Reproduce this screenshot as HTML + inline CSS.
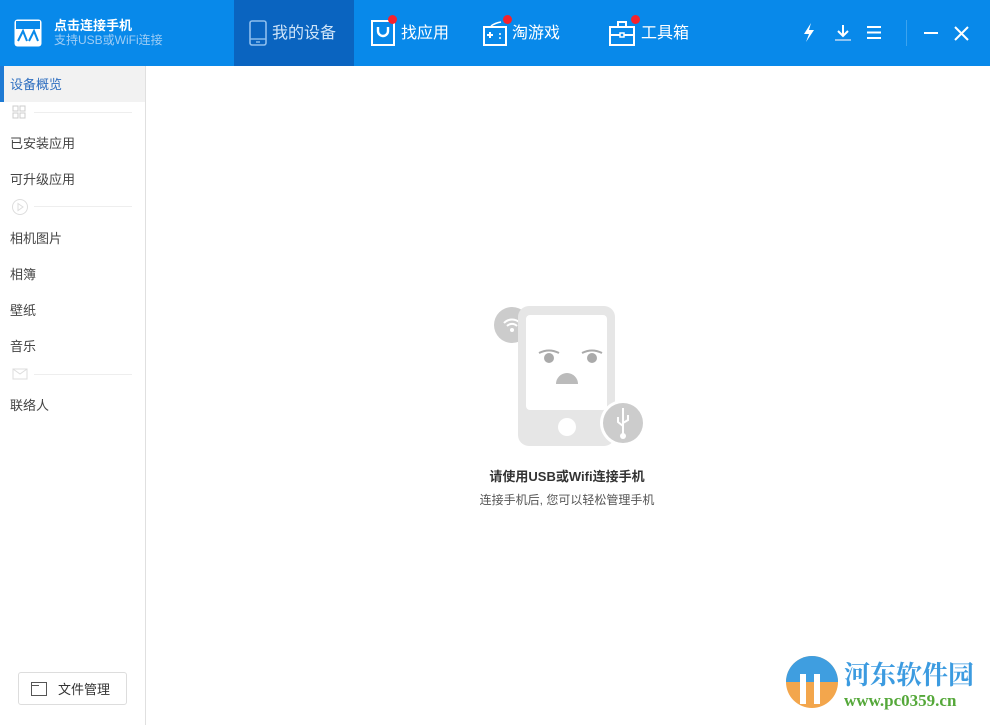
<!DOCTYPE html>
<html><head><meta charset="utf-8"><style>
*{margin:0;padding:0;box-sizing:border-box}
body{width:990px;height:725px;overflow:hidden;background:#fff;font-family:"Liberation Sans","Noto Sans CJK SC",sans-serif;position:relative}
.top{position:absolute;left:0;top:0;width:990px;height:66px;background:#0889ea}
.abs{position:absolute}
.w{color:#fff}
.side{position:absolute;left:0;top:66px;width:146px;height:659px;border-right:1px solid #e0e0e0;background:#fff}
.item{position:absolute;left:10px;font-size:13px;color:#444}
.sep{position:absolute;left:12px;width:120px;height:16px}
.sep .l{position:absolute;left:22px;top:7px;width:98px;height:1px;background:#eee}
.dot{position:absolute;width:9px;height:9px;border-radius:50%;background:#f5222d}
</style></head><body>
<div class="top">
 <svg class="abs" style="left:14px;top:19px" width="28" height="28" viewBox="0 0 28 28"><rect x="0.5" y="0.5" width="27" height="27" rx="3" fill="#fff"/><rect x="2" y="2" width="24" height="8" fill="#0889ea"/><path d="M4 22 L9 12 L13 22 M15 22 L20 12 L24 22" stroke="#0889ea" stroke-width="2" fill="none"/></svg>
 <div class="abs w" style="left:54px;top:15px;font-size:13px;font-weight:bold">点击连接手机</div>
 <div class="abs" style="left:54px;top:31px;font-size:12px;color:#9fcdf5">支持USB或WiFi连接</div>
 <div class="abs" style="left:234px;top:0;width:120px;height:66px;background:#0a64c0"></div>
 <svg class="abs" style="left:249px;top:20px" width="18" height="26"><rect x="1" y="1" width="16" height="24" rx="2" fill="none" stroke="#8ebfee" stroke-width="1.6"/><line x1="1" y1="19" x2="17" y2="19" stroke="#8ebfee" stroke-width="1.4"/><line x1="7" y1="22" x2="11" y2="22" stroke="#8ebfee" stroke-width="1.4"/></svg>
 <div class="abs" style="left:272px;top:19px;font-size:16px;color:#cfe4f8">我的设备</div>
 <svg class="abs" style="left:371px;top:20px" width="25" height="26"><rect x="1" y="1" width="22" height="24" fill="none" stroke="#fff" stroke-width="2"/><path d="M7 7 v4 a5 5 0 0 0 10 0 v-4" stroke="#fff" stroke-width="2.4" fill="none"/></svg>
 <div class="dot" style="left:388px;top:15px"></div>
 <div class="abs w" style="left:401px;top:19px;font-size:16px">找应用</div>
 <svg class="abs" style="left:483px;top:20px" width="26" height="26"><rect x="1" y="7" width="22" height="18" fill="none" stroke="#fff" stroke-width="2"/><path d="M4 15h6M7 12v6" stroke="#fff" stroke-width="2"/><circle cx="17" cy="14" r="1" fill="#fff"/><circle cx="17" cy="18" r="1" fill="#fff"/><path d="M8 6 q4 -3 10 -4" stroke="#fff" stroke-width="1.5" fill="none"/></svg>
 <div class="dot" style="left:503px;top:15px"></div>
 <div class="abs w" style="left:512px;top:19px;font-size:16px">淘游戏</div>
 <svg class="abs" style="left:609px;top:20px" width="28" height="26"><rect x="1" y="7" width="24" height="18" fill="none" stroke="#fff" stroke-width="2"/><path d="M9 7v-5h8v5M1 15h24" stroke="#fff" stroke-width="2" fill="none"/><rect x="11" y="13" width="4" height="4" fill="#0889ea" stroke="#fff" stroke-width="1.5"/></svg>
 <div class="dot" style="left:631px;top:15px"></div>
 <div class="abs w" style="left:641px;top:19px;font-size:16px">工具箱</div>
 <svg class="abs" style="left:802px;top:23px" width="14" height="19"><path d="M9 0 L2 11 H7 L4 19 L12 7 H7 Z" fill="#fff"/></svg>
 <svg class="abs" style="left:835px;top:24px" width="16" height="18"><path d="M8 1v11M3 7l5 5 5-5" stroke="#fff" stroke-width="2" fill="none"/><line x1="0" y1="16" x2="16" y2="16" stroke="#8ec4f2" stroke-width="2"/></svg>
 <svg class="abs" style="left:867px;top:26px" width="15" height="13"><path d="M0 1h14M0 6.5h14M0 12h14" stroke="#fff" stroke-width="2"/></svg>
 <div class="abs" style="left:906px;top:20px;width:1px;height:26px;background:#3ca3ef"></div>
 <svg class="abs" style="left:924px;top:32px" width="14" height="3"><rect width="14" height="2" fill="#fff"/></svg>
 <svg class="abs" style="left:954px;top:26px" width="15" height="15"><path d="M1 1l13 13M14 1L1 14" stroke="#fff" stroke-width="2"/></svg>
</div>
<div class="side">
 <div class="abs" style="left:0;top:0;width:145px;height:36px;background:#f2f2f2;border-left:4px solid #1e7ad4"></div>
 <div class="item" style="top:8px;color:#2f6fc0">设备概览</div>
 <div class="sep" style="top:39px"><svg width="14" height="14"><rect x="1" y="1" width="5" height="5" fill="none" stroke="#ccc"/><rect x="8" y="1" width="5" height="5" fill="none" stroke="#ccc"/><rect x="1" y="8" width="5" height="5" fill="none" stroke="#ccc"/><rect x="8" y="8" width="5" height="5" fill="none" stroke="#ccc"/></svg><div class="l"></div></div>
 <div class="item" style="top:67px">已安装应用</div>
 <div class="item" style="top:103px">可升级应用</div>
 <div class="sep" style="top:133px"><svg width="18" height="18"><circle cx="8" cy="8" r="7.5" fill="none" stroke="#ddd"/><path d="M6 4.5l5 3.5-5 3.5z" fill="none" stroke="#ddd"/></svg><div class="l"></div></div>
 <div class="item" style="top:162px">相机图片</div>
 <div class="item" style="top:198px">相簿</div>
 <div class="item" style="top:234px">壁纸</div>
 <div class="item" style="top:270px">音乐</div>
 <div class="sep" style="top:301px"><svg width="16" height="14"><rect x="1" y="2" width="14" height="10" fill="none" stroke="#ddd"/><path d="M1 2l7 5 7-5" fill="none" stroke="#ddd"/></svg><div class="l"></div></div>
 <div class="item" style="top:329px">联络人</div>
 <div class="abs" style="left:18px;top:606px;width:109px;height:33px;border:1px solid #ddd;border-radius:3px"></div>
 <svg class="abs" style="left:31px;top:616px" width="16" height="14"><rect x="0.5" y="0.5" width="15" height="13" fill="none" stroke="#555"/><line x1="0.5" y1="3.5" x2="8" y2="3.5" stroke="#555"/></svg>
 <div class="item" style="left:58px;top:613px;color:#333">文件管理</div>
</div>
<svg class="abs" style="left:492px;top:305px" width="155" height="142">
 <circle cx="20" cy="20" r="18" fill="#ccc"/>
 <path d="M12 18a11 11 0 0 1 16 0M15 21a7 7 0 0 1 10 0" stroke="#fff" stroke-width="2" fill="none"/><circle cx="20" cy="25" r="2" fill="#fff"/>
 <rect x="26" y="1" width="97" height="140" rx="11" fill="#e6e6e6"/>
 <rect x="34" y="10" width="81" height="95" rx="4" fill="#fff"/>
 <circle cx="75" cy="122" r="9" fill="#fff"/>
 <circle cx="57" cy="53" r="5" fill="#aaa"/><circle cx="100" cy="53" r="5" fill="#aaa"/>
 <path d="M47 48q10-5 20 0M90 48q10-5 20 0" stroke="#aaa" stroke-width="2" fill="none"/>
 <path d="M64 79a10 10 0 0 1 22 0z" fill="#bbb"/>
 <circle cx="131" cy="118" r="23" fill="#fff"/><circle cx="131" cy="118" r="20" fill="#ccc"/>
 <path d="M131 103v27M126 112v5l5 4M136 110v5l-5 3" stroke="#fff" stroke-width="2" fill="none"/><circle cx="131" cy="131" r="3" fill="#fff"/>
</svg>
<div class="abs" style="left:0;width:1134px;top:466px;text-align:center;font-size:13px;font-weight:bold;color:#333">请使用USB或Wifi连接手机</div>
<div class="abs" style="left:0;width:1134px;top:491px;text-align:center;font-size:12px;color:#555">连接手机后, 您可以轻松管理手机</div>
<svg class="abs" style="left:784px;top:654px" width="56" height="56"><circle cx="28" cy="28" r="26" fill="#f3a64c"/><path d="M2 28a26 26 0 0 1 52 0z" fill="#3f9ee0"/><rect x="16" y="20" width="6" height="30" fill="#fff"/><rect x="30" y="20" width="6" height="30" fill="#fff"/></svg>
<div class="abs" style="left:844px;top:655px;font-size:26px;font-weight:bold;color:#3c9be0;font-family:'Noto Serif CJK SC',serif;letter-spacing:0px">河东软件园</div>
<div class="abs" style="left:844px;top:691px;font-size:17px;font-weight:bold;color:#55a83a;font-family:'Liberation Serif',serif">www.pc0359.cn</div>
</body></html>
